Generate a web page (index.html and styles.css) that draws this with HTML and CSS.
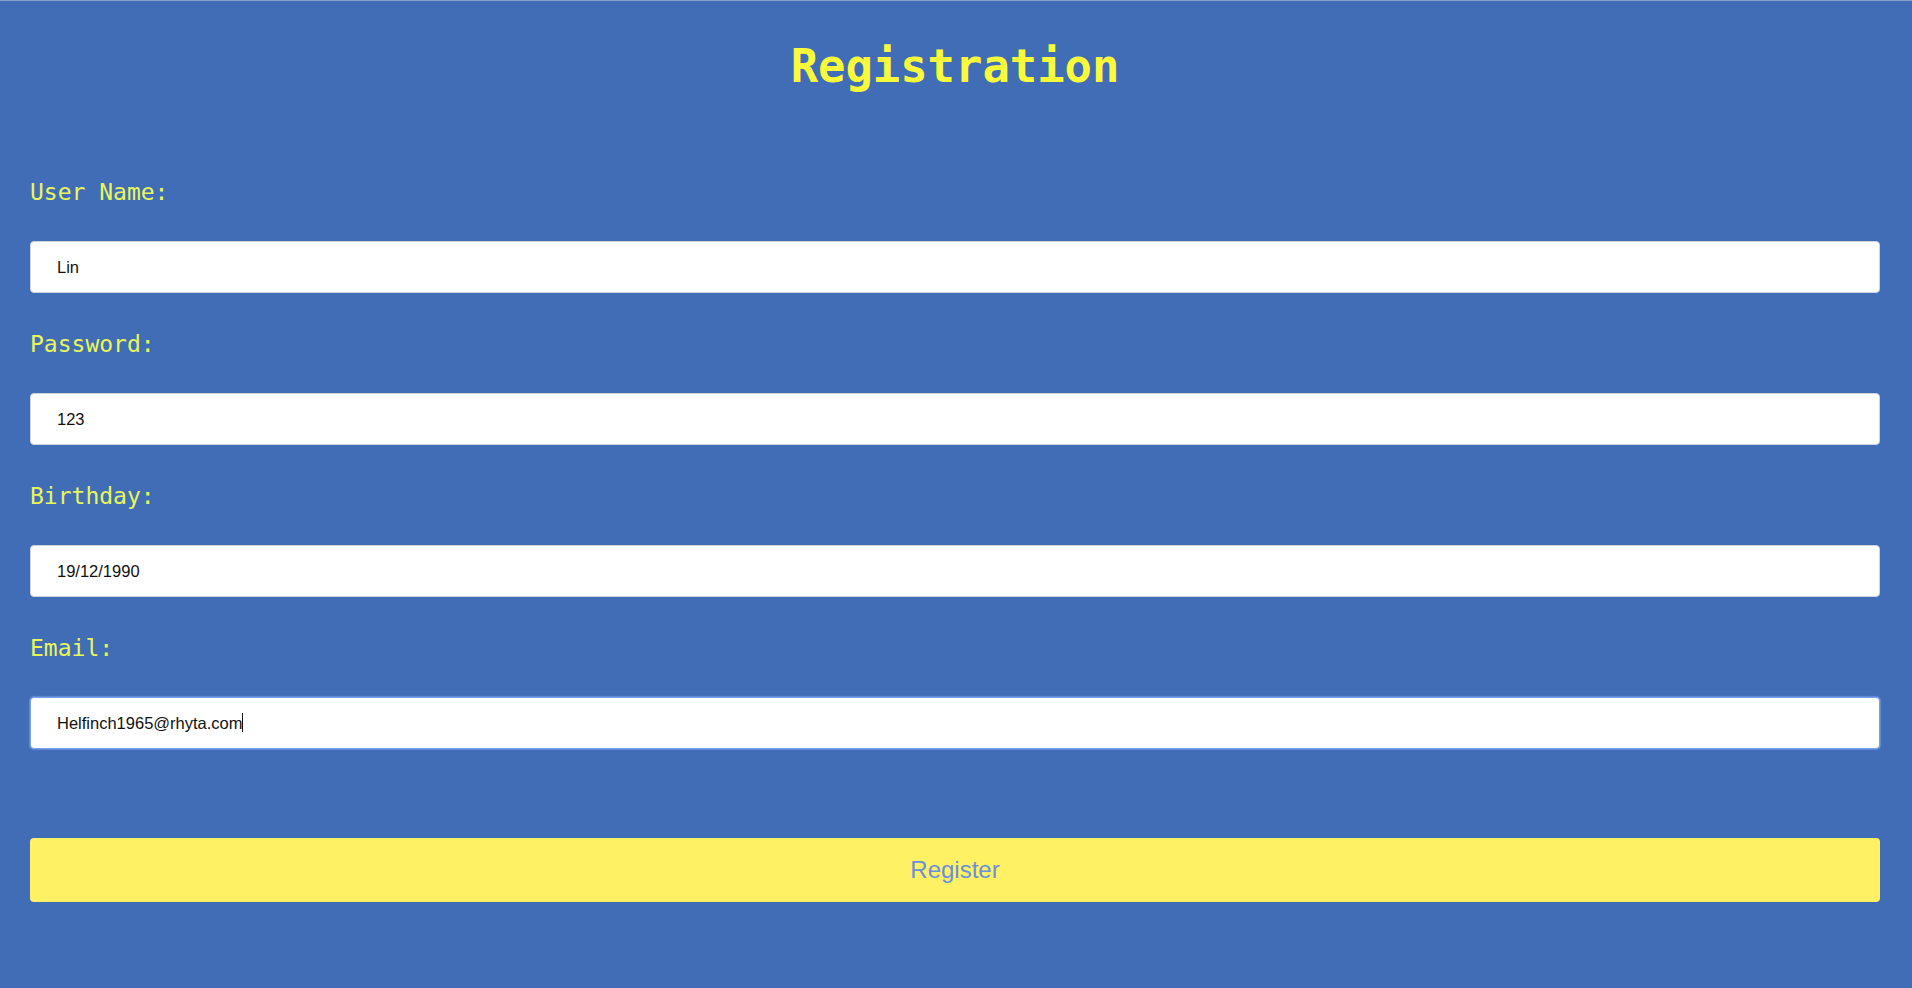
FILE: index.html
```html
<!DOCTYPE html>
<html lang="en">
<head>
<meta charset="utf-8">
<title>Registration</title>
<link rel="stylesheet" href="styles.css">
</head>
<body>
<main class="page">
  <h1 class="title">Registration</h1>
  <form class="form">
    <div class="field">
      <label class="label" for="user">User Name:</label>
      <input class="input" id="user" type="text" value="Lin">
    </div>
    <div class="field">
      <label class="label" for="pass">Password:</label>
      <input class="input" id="pass" type="text" value="123">
    </div>
    <div class="field">
      <label class="label" for="bday">Birthday:</label>
      <input class="input" id="bday" type="text" value="19/12/1990">
    </div>
    <div class="field">
      <label class="label" for="email">Email:</label>
      <div class="input-wrap">
        <input class="input input-active" id="email" type="text" value="Helfinch1965@rhyta.com">
        <span class="caret"></span>
      </div>
    </div>
    <button class="button" type="button">Register</button>
  </form>
</main>
</body>
</html>
```
FILE: styles.css
```css
html, body {
  margin: 0;
  padding: 0;
}
body {
  background: #416db6;
  border-top: 1px solid #8c9fcc;
  min-height: 987px;
}
.page {
  padding: 40px 32px 0 30px;
}
.title {
  margin: 0;
  text-align: center;
  font-family: "DejaVu Sans Mono", monospace;
  font-weight: bold;
  font-size: 45.5px;
  line-height: 52px;
  color: #f9fb3a;
}
.form {
  display: flex;
  flex-direction: column;
  padding-top: 86px;
}
.field {
  display: flex;
  flex-direction: column;
  margin-bottom: 38px;
}
.field:last-of-type {
  margin-bottom: 89px;
}
.label {
  font-family: "DejaVu Sans Mono", monospace;
  font-size: 23px;
  line-height: 27px;
  color: #e8f65a;
  margin-bottom: 35px;
}
.input-wrap {
  position: relative;
}
.input {
  box-sizing: border-box;
  display: block;
  width: 100%;
  height: 52px;
  padding: 0 12px 0 26px;
  border: 1px solid #d0d4dc;
  border-radius: 4px;
  background: #fff;
  font-family: "Liberation Sans", Arial, sans-serif;
  font-size: 16.5px;
  color: #111;
  outline: none;
}
.input-active {
  border-color: #79a0ec;
  box-shadow: 0 0 1px 1px rgba(121, 160, 236, 0.6);
}
.caret {
  position: absolute;
  left: 212px;
  top: 16px;
  width: 1px;
  height: 19px;
  background: #111;
}
.button {
  box-sizing: border-box;
  width: 100%;
  height: 64px;
  border: none;
  border-radius: 4px;
  background: #fff064;
  font-family: "Liberation Sans", Arial, sans-serif;
  font-size: 24px;
  color: #6a8fdc;
  cursor: pointer;
}
```
